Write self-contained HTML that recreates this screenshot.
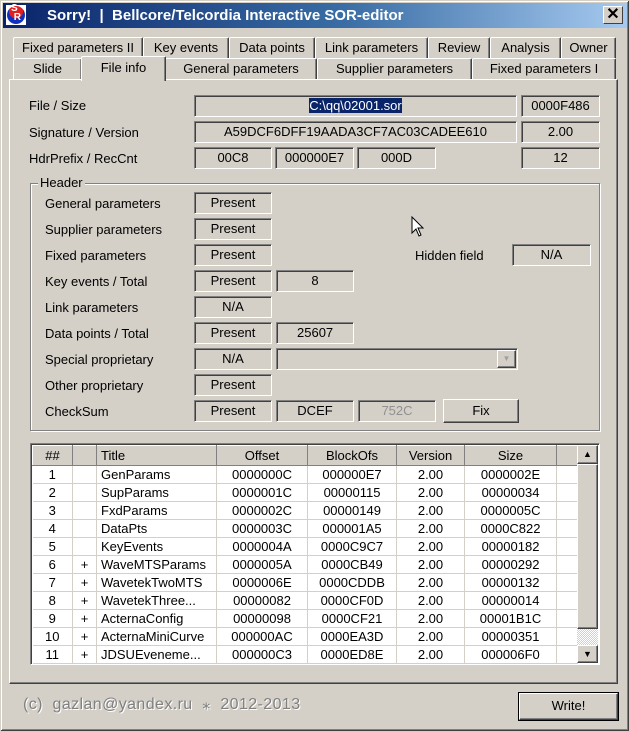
<!DOCTYPE html>
<html><head><meta charset="utf-8"><style>
*{box-sizing:border-box;margin:0;padding:0}
body{width:630px;height:732px;overflow:hidden;background:#d4d0c8;font-family:"Liberation Sans",Arial,sans-serif;font-size:13px;color:#000;position:relative}
.a{position:absolute}
.win{left:0;top:0;width:630px;height:732px;border:1px solid #d4d0c8;box-shadow:inset -1px -1px 0 #404040,inset 1px 1px 0 #fff,inset -2px -2px 0 #808080}
.tb{left:3px;top:3px;width:624px;height:25px;background:linear-gradient(to right,#0a246a 0%,#3a6ea5 55%,#a6caf0 100%)}
.tt{left:47px;top:7px;color:#fff;font-weight:bold;font-size:15px;white-space:nowrap}
.cl{left:603px;top:6px;width:20px;height:18px;background:#d4d0c8;border:1px solid;border-color:#fff #404040 #404040 #fff;font-weight:bold;font-size:16px;line-height:15px;text-align:center}
.tab{height:21px;background:#d4d0c8;border:1px solid;border-color:#fff #404040 transparent #fff;border-bottom:none;border-radius:2px 2px 0 0;text-align:center;line-height:20px;white-space:nowrap;box-shadow:inset -1px 0 0 #808080}
.panel{left:9px;top:79px;width:609px;height:605px;border:1px solid;border-color:#fff #404040 #404040 #fff;box-shadow:inset -1px -1px 0 #808080}
.f{border:1px solid;border-color:#808080 #fff #fff #808080;box-shadow:inset 1px 1px 0 #404040;text-align:center;line-height:19px;white-space:nowrap}
.l{white-space:nowrap}
.grp{left:30px;top:183px;width:570px;height:248px;border:1px solid #808080;box-shadow:1px 1px 0 #fff,inset 1px 1px 0 #fff}
.btn{border:1px solid;border-color:#fff #404040 #404040 #fff;box-shadow:inset -1px -1px 0 #808080;text-align:center;line-height:19px}
table{border-collapse:collapse;font-size:13px}
td{height:18px;border-right:1px solid #d4d0c8;border-bottom:1px solid #d4d0c8;text-align:center;padding:0;white-space:nowrap}
td.t{text-align:left;padding-left:4px}
th{height:20px;font-weight:normal;background:#d4d0c8;border:1px solid;border-color:#fff #808080 #808080 #fff;padding:0;line-height:17px}
</style></head><body>
<div class="a win"></div>
<div class="a tb"></div>
<div class="a" style="left:6px;top:5px;width:20px;height:20px;background:#fff;"></div>
<div class="a" style="left:7px;top:6px;width:18px;height:18px;border-radius:50%;background:radial-gradient(circle at 50% 30%,#e02020 0 45%,#1030c0 46%);"></div>
<div class="a" style="left:11px;top:4px;color:#fff;font-weight:bold;font-size:10px;line-height:9px">S<br>&nbsp;R</div>
<div class="a tt">Sorry!&nbsp; |&nbsp; Bellcore/Telcordia Interactive SOR-editor</div>
<div class="a cl">✕</div>

<div class="a tab" style="left:13px;top:37px;width:130px">Fixed parameters II</div>
<div class="a tab" style="left:143px;top:37px;width:86px">Key events</div>
<div class="a tab" style="left:229px;top:37px;width:86px">Data points</div>
<div class="a tab" style="left:315px;top:37px;width:113px">Link parameters</div>
<div class="a tab" style="left:428px;top:37px;width:62px">Review</div>
<div class="a tab" style="left:490px;top:37px;width:71px">Analysis</div>
<div class="a tab" style="left:561px;top:37px;width:55px">Owner</div>
<div class="a panel"></div>
<div class="a tab" style="left:13px;top:58px;width:69px">Slide</div>
<div class="a tab" style="left:165px;top:58px;width:152px">General parameters</div>
<div class="a tab" style="left:317px;top:58px;width:155px">Supplier parameters</div>
<div class="a tab" style="left:472px;top:58px;width:144px">Fixed parameters I</div>
<div class="a tab" style="left:81px;top:56px;width:85px;height:25px;line-height:21px;box-shadow:inset -1px 0 0 #808080">File info</div>

<div class="a l" style="left:29px;top:98px">File / Size</div>
<div class="a l" style="left:29px;top:125px">Signature / Version</div>
<div class="a l" style="left:29px;top:151px">HdrPrefix / RecCnt</div>
<div class="a f" style="left:194px;top:95px;width:323px;height:22px"><span style="background:#0a246a;color:#fff">C:\qq\02001.sor</span></div>
<div class="a f" style="left:521px;top:95px;width:79px;height:22px">0000F486</div>
<div class="a f" style="left:194px;top:121px;width:323px;height:22px">A59DCF6DFF19AADA3CF7AC03CADEE610</div>
<div class="a f" style="left:521px;top:121px;width:79px;height:22px">2.00</div>
<div class="a f" style="left:194px;top:147px;width:78px;height:22px">00C8</div>
<div class="a f" style="left:275px;top:147px;width:79px;height:22px">000000E7</div>
<div class="a f" style="left:357px;top:147px;width:79px;height:22px">000D</div>
<div class="a f" style="left:521px;top:147px;width:79px;height:22px">12</div>

<div class="a grp"></div>
<div class="a" style="left:38px;top:175px;background:#d4d0c8;padding:0 2px">Header</div>
<div class="a l" style="left:45px;top:196px">General parameters</div>
<div class="a l" style="left:45px;top:222px">Supplier parameters</div>
<div class="a l" style="left:45px;top:248px">Fixed parameters</div>
<div class="a l" style="left:45px;top:274px">Key events / Total</div>
<div class="a l" style="left:45px;top:300px">Link parameters</div>
<div class="a l" style="left:45px;top:326px">Data points / Total</div>
<div class="a l" style="left:45px;top:352px">Special proprietary</div>
<div class="a l" style="left:45px;top:378px">Other proprietary</div>
<div class="a l" style="left:45px;top:404px">CheckSum</div>
<div class="a f" style="left:194px;top:192px;width:78px;height:22px">Present</div>
<div class="a f" style="left:194px;top:218px;width:78px;height:22px">Present</div>
<div class="a f" style="left:194px;top:244px;width:78px;height:22px">Present</div>
<div class="a f" style="left:194px;top:270px;width:78px;height:22px">Present</div>
<div class="a f" style="left:276px;top:270px;width:78px;height:22px">8</div>
<div class="a f" style="left:194px;top:296px;width:78px;height:22px">N/A</div>
<div class="a f" style="left:194px;top:322px;width:78px;height:22px">Present</div>
<div class="a f" style="left:276px;top:322px;width:78px;height:22px;text-align:left;padding-left:20px">25607</div>
<div class="a f" style="left:194px;top:348px;width:78px;height:22px">N/A</div>
<div class="a f" style="left:276px;top:348px;width:242px;height:22px"></div>
<div class="a btn" style="left:497px;top:350px;width:19px;height:18px;font-size:8px;color:#a0a0a0;line-height:16px">▼</div>
<div class="a f" style="left:194px;top:374px;width:78px;height:22px">Present</div>
<div class="a f" style="left:194px;top:400px;width:78px;height:22px">Present</div>
<div class="a f" style="left:276px;top:400px;width:78px;height:22px">DCEF</div>
<div class="a f" style="left:358px;top:400px;width:78px;height:22px;color:#909090">752C</div>
<div class="a btn" style="left:443px;top:399px;width:76px;height:24px;line-height:21px">Fix</div>
<div class="a l" style="left:415px;top:248px">Hidden field</div>
<div class="a f" style="left:512px;top:244px;width:79px;height:22px">N/A</div>
<svg class="a" style="left:411px;top:216px" width="14" height="22" viewBox="0 0 14 22"><path d="M1 1 L1 17 L5 13 L8 20 L10 19 L7 12 L12 12 Z" fill="#fff" stroke="#000" stroke-width="1"/></svg>

<div class="a" style="left:30px;top:443px;width:570px;height:222px;border:1px solid;border-color:#808080 #fff #fff #808080;box-shadow:inset 1px 1px 0 #404040;background:#fff;overflow:hidden">
<table style="position:absolute;left:1px;top:1px;width:545px;table-layout:fixed">
<colgroup><col style="width:40px"><col style="width:24px"><col style="width:120px"><col style="width:91px"><col style="width:89px"><col style="width:68px"><col style="width:92px"><col style="width:21px"></colgroup>
<tr><th>##</th><th></th><th style="text-align:left;padding-left:4px">Title</th><th>Offset</th><th>BlockOfs</th><th>Version</th><th>Size</th><th></th></tr>
<tr><td>1</td><td></td><td class="t">GenParams</td><td>0000000C</td><td>000000E7</td><td>2.00</td><td>0000002E</td><td></td></tr>
<tr><td>2</td><td></td><td class="t">SupParams</td><td>0000001C</td><td>00000115</td><td>2.00</td><td>00000034</td><td></td></tr>
<tr><td>3</td><td></td><td class="t">FxdParams</td><td>0000002C</td><td>00000149</td><td>2.00</td><td>0000005C</td><td></td></tr>
<tr><td>4</td><td></td><td class="t">DataPts</td><td>0000003C</td><td>000001A5</td><td>2.00</td><td>0000C822</td><td></td></tr>
<tr><td>5</td><td></td><td class="t">KeyEvents</td><td>0000004A</td><td>0000C9C7</td><td>2.00</td><td>00000182</td><td></td></tr>
<tr><td>6</td><td>+</td><td class="t">WaveMTSParams</td><td>0000005A</td><td>0000CB49</td><td>2.00</td><td>00000292</td><td></td></tr>
<tr><td>7</td><td>+</td><td class="t">WavetekTwoMTS</td><td>0000006E</td><td>0000CDDB</td><td>2.00</td><td>00000132</td><td></td></tr>
<tr><td>8</td><td>+</td><td class="t">WavetekThree...</td><td>00000082</td><td>0000CF0D</td><td>2.00</td><td>00000014</td><td></td></tr>
<tr><td>9</td><td>+</td><td class="t">ActernaConfig</td><td>00000098</td><td>0000CF21</td><td>2.00</td><td>00001B1C</td><td></td></tr>
<tr><td>10</td><td>+</td><td class="t">ActernaMiniCurve</td><td>000000AC</td><td>0000EA3D</td><td>2.00</td><td>00000351</td><td></td></tr>
<tr><td>11</td><td>+</td><td class="t">JDSUEveneme...</td><td>000000C3</td><td>0000ED8E</td><td>2.00</td><td>000006F0</td><td></td></tr>
<tr><td></td><td></td><td></td><td></td><td></td><td></td><td></td><td></td></tr>
</table>
<div class="a" style="left:546px;top:1px;width:21px;height:218px;background:repeating-conic-gradient(#d4d0c8 0 25%,#fff 0 50%) 0 0/2px 2px"></div>
<div class="a btn" style="left:546px;top:1px;width:21px;height:19px;font-size:9px;line-height:16px;background:#d4d0c8">▲</div>
<div class="a btn" style="left:546px;top:20px;width:21px;height:165px;background:#d4d0c8"></div>
<div class="a btn" style="left:546px;top:201px;width:21px;height:18px;font-size:9px;line-height:16px;background:#d4d0c8">▼</div>
</div>

<div class="a l" style="left:23px;top:694px;font-size:16px;letter-spacing:0.4px;color:#808080;text-shadow:1px 1px 0 #fff">(c)&nbsp; gazlan@yandex.ru&nbsp; ⁎&nbsp; 2012-2013</div>
<div class="a" style="left:518px;top:692px;width:101px;height:29px;border:1px solid #000"></div>
<div class="a btn" style="left:519px;top:693px;width:99px;height:27px;line-height:24px">Write!</div>
</body></html>
